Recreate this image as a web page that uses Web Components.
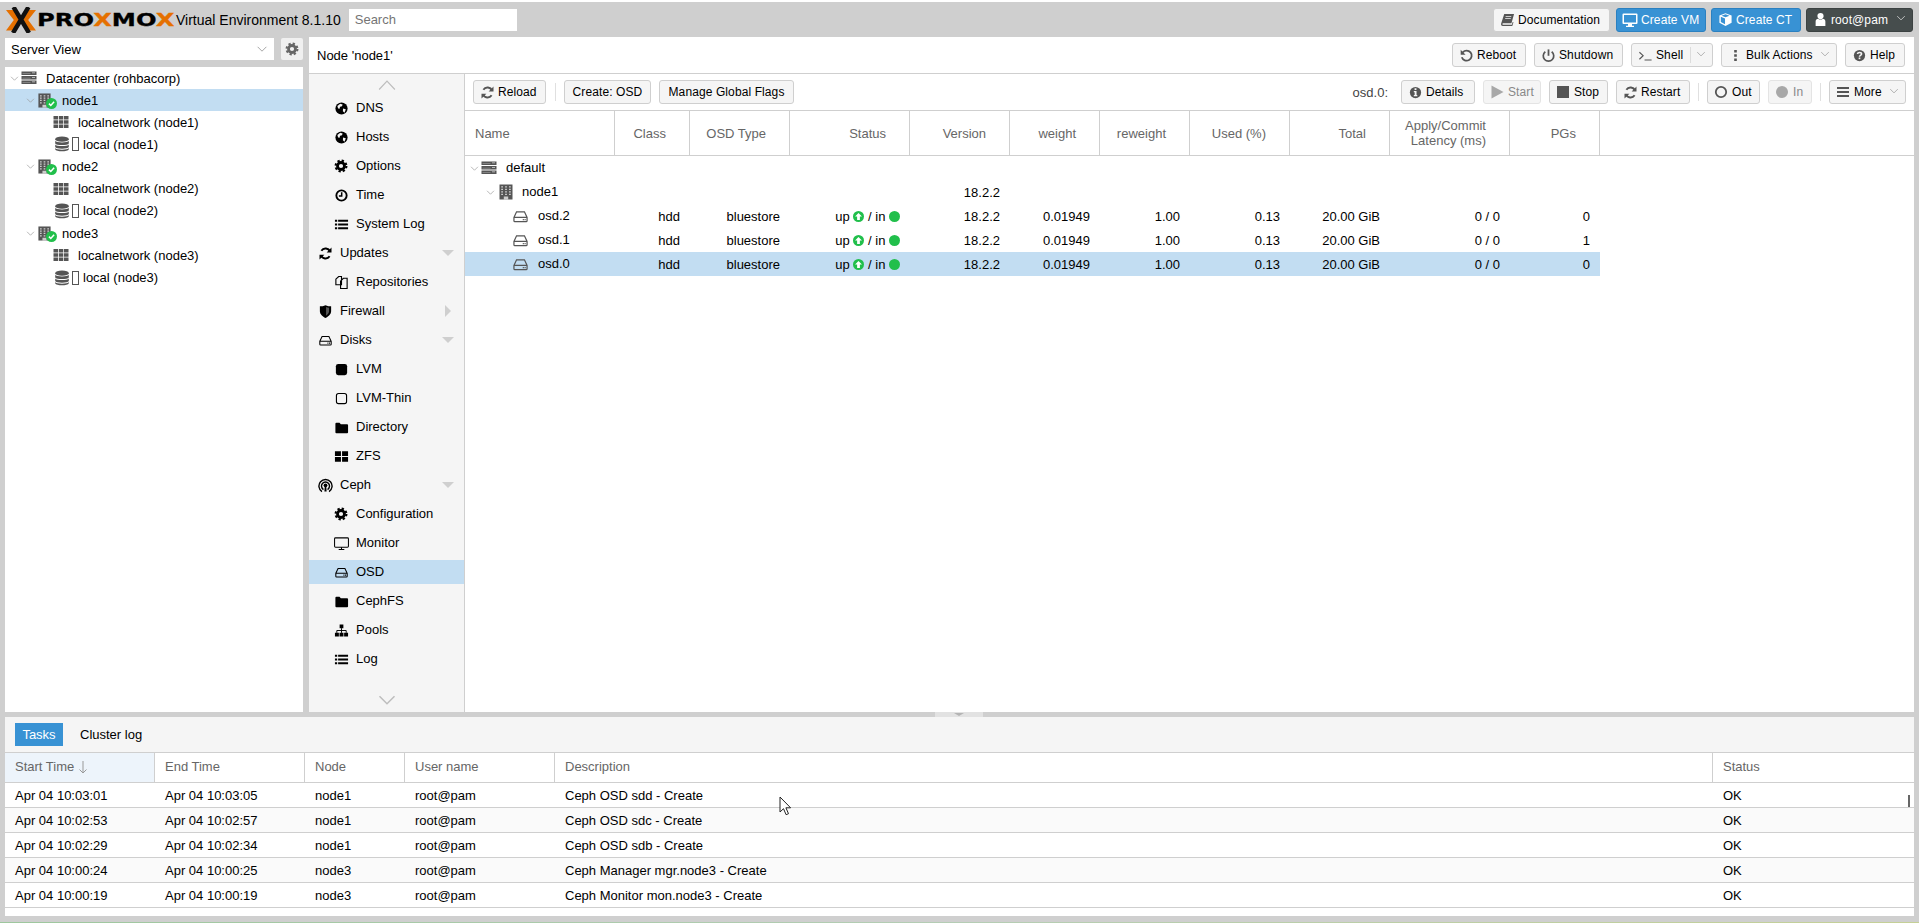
<!DOCTYPE html>
<html>
<head>
<meta charset="utf-8">
<title>node1 - Proxmox Virtual Environment</title>
<style>
  html, body { margin: 0; padding: 0; height: 100%; overflow: hidden; }
  body { font: 13px "Liberation Sans", Arial, sans-serif; color: #000; }
</style>
</head>
<body>

<pve-app>
  <pve-topbar slot="top"></pve-topbar>

  <pve-side slot="side">
    <tree-row depth="0" icon="datacenter" open>Datacenter (rohbacorp)</tree-row>
    <tree-row depth="1" icon="node" open selected>node1</tree-row>
    <tree-row depth="2" icon="network">localnetwork (node1)</tree-row>
    <tree-row depth="2" icon="storage">local (node1)</tree-row>
    <tree-row depth="1" icon="node" open>node2</tree-row>
    <tree-row depth="2" icon="network">localnetwork (node2)</tree-row>
    <tree-row depth="2" icon="storage">local (node2)</tree-row>
    <tree-row depth="1" icon="node" open>node3</tree-row>
    <tree-row depth="2" icon="network">localnetwork (node3)</tree-row>
    <tree-row depth="2" icon="storage">local (node3)</tree-row>
  </pve-side>

  <pve-content slot="main">
    <pve-nav slot="nav">
      <nav-item sub icon="globe">DNS</nav-item>
      <nav-item sub icon="globe">Hosts</nav-item>
      <nav-item sub icon="gear" isize="14">Options</nav-item>
      <nav-item sub icon="clock">Time</nav-item>
      <nav-item sub icon="list">System Log</nav-item>
      <nav-item icon="refresh" arrow="down">Updates</nav-item>
      <nav-item sub icon="files">Repositories</nav-item>
      <nav-item icon="shield" arrow="right">Firewall</nav-item>
      <nav-item icon="hdd" isize="13" arrow="down">Disks</nav-item>
      <nav-item sub icon="square">LVM</nav-item>
      <nav-item sub icon="square-o">LVM-Thin</nav-item>
      <nav-item sub icon="folder">Directory</nav-item>
      <nav-item sub icon="th">ZFS</nav-item>
      <nav-item icon="ceph" arrow="down">Ceph</nav-item>
      <nav-item sub icon="gear" isize="14">Configuration</nav-item>
      <nav-item sub icon="desktop">Monitor</nav-item>
      <nav-item sub icon="hdd" isize="13" selected>OSD</nav-item>
      <nav-item sub icon="folder">CephFS</nav-item>
      <nav-item sub icon="sitemap">Pools</nav-item>
      <nav-item sub icon="list">Log</nav-item>
    </pve-nav>
    <osd-panel slot="panel"></osd-panel>
  </pve-content>

  <task-log slot="bottom"></task-log>
</pve-app>

<script>
// icons are all drawn on a 16x16 box, currentColor
const ICONS = {
  globe: '<circle cx="8" cy="8" r="6.5" fill="currentColor"/><path fill="#f5f5f5" d="M3.6 5.2 6.6 3l2.6.6-.7 2-2 .5-.8 2.4-1.4-.8zM9.6 8l3 .8-1.4 3.6-1.7-1.4z"/>',
  gear: '<circle cx="8" cy="8" r="4" fill="none" stroke="currentColor" stroke-width="3.2"/><circle cx="8" cy="8" r="6.2" fill="none" stroke="currentColor" stroke-width="2.4" stroke-dasharray="2.6 2.27"/>',
  clock: '<circle cx="8" cy="8" r="5.5" fill="none" stroke="currentColor" stroke-width="2"/><path fill="none" stroke="currentColor" stroke-width="1.6" d="M8.2 4.600v4H5.200"/>',
  list: '<path fill="currentColor" d="M1 3h2.400v2H1zM4.400 3H15v2H4.400zM1 7h2.400v2H1zM4.400 7H15v2H4.400zM1 11h2.400v2H1zM4.400 11H15v2H4.400z"/>',
  refresh: '<path fill="none" stroke="currentColor" stroke-width="2" d="M12.800 6A5.200 5.200 0 0 0 3.600 5M3.200 10a5.200 5.200 0 0 0 9.200 1"/><path fill="currentColor" d="M14.400 1.600v5.200H9.200zM1.600 14.400V9.200h5.200z"/>',
  files: '<path fill="#f5f5f5" stroke="currentColor" stroke-width="1.200" d="M2 4.500 5 1.600h3v8.800H2zM7 6.500l3-3h4v10.900H7z"/>',
  shield: '<path fill="currentColor" d="M8 1.200c2 1 4 1.300 6 1.300v5.200c0 3.200-3 5.800-6 7.100-3-1.300-6-3.900-6-7.100V2.500c2 0 4-.3 6-1.300z"/><path fill="#f5f5f5" d="M8.600 3.300c1 .4 2 .6 3.200.7v3.700c0 2-1.600 3.700-3.200 4.700z" opacity=".35"/>',
  hdd: '<path fill="none" stroke="currentColor" stroke-width="1.300" d="M1 9 3.800 3h8.400L15 9v3.500a1 1 0 0 1-1 1H2a1 1 0 0 1-1-1zM1 9h14"/><path fill="currentColor" d="M10.400 10.600h1.200v1.300h-1.200zM12.300 10.600h1.200v1.300h-1.200z"/>',
  square: '<rect x="2" y="2" width="12" height="12" rx="2.500" fill="currentColor"/>',
  'square-o': '<rect x="2.600" y="2.600" width="10.800" height="10.800" rx="2.200" fill="none" stroke="currentColor" stroke-width="1.200"/>',
  folder: '<path fill="currentColor" d="M1.500 4a1 1 0 0 1 1-1h3.400l1.400 1.500H14a1 1 0 0 1 1 1V13a1 1 0 0 1-1 1H2.500a1 1 0 0 1-1-1z"/>',
  th: '<path fill="currentColor" d="M1 2.500H7.400V7.400H1zM8.600 2.500H15v4.900H8.600zM1 8.600H7.400v4.900H1zM8.600 8.600H15v4.900H8.600z"/>',
  ceph: '<g fill="none" stroke="currentColor"><path stroke-width="1.500" d="M4.200 14.500A7 7 0 1 1 11.800 14.500"/><path stroke-width="1.500" d="M5.800 12.300A4.300 4.300 0 1 1 10.200 12.300"/></g><circle cx="8" cy="7.800" r="2" fill="currentColor"/><path fill="currentColor" d="M7.200 9h1.600l.4 5.500H6.800z"/>',
  desktop: '<rect x=".6" y="2" width="14.800" height="10" rx="1" fill="none" stroke="currentColor" stroke-width="1.100"/><path fill="none" stroke="currentColor" stroke-width="1.100" d="M8 12v2M5 14.300h6"/>',
  sitemap: '<path fill="currentColor" d="M6 1.500h4v4H6zM1 10.500h4.200v4H1zM5.900 10.500h4.200v4H5.900zM10.800 10.500H15v4h-4.200z"/><path fill="none" stroke="currentColor" d="M8 5.500v5M3 10.500V8h10v2.500"/>',
  reboot: '<path fill="none" stroke="currentColor" stroke-width="1.900" d="M4 4.600A5.400 5.400 0 1 1 3 9.800"/><path fill="currentColor" d="M1.800 1.900v5.200H7z"/>',
  power: '<path fill="none" stroke="currentColor" stroke-width="1.800" d="M4.600 4a5.600 5.600 0 1 0 6.800 0"/><path fill="none" stroke="currentColor" stroke-width="1.900" d="M8 1.500v6.800"/>',
  terminal: '<path fill="none" stroke="currentColor" stroke-width="1.200" d="M1.500 4.500 5.500 8.200 1.500 12M7 12.800h7.500"/>',
  dots: '<path fill="currentColor" d="M6.600 2.200h2.800v2.600H6.600zM6.600 6.700h2.800v2.600H6.600zM6.600 11.200h2.800v2.600H6.600z"/>',
  help: '<circle cx="8" cy="8" r="6" fill="currentColor"/><path fill="none" stroke="#f5f5f5" stroke-width="1.700" d="M5.800 6.400c.3-2.200 4.400-2.200 4.400 0 0 1.500-2.200 1.400-2.200 2.800"/><path fill="#f5f5f5" d="M7.100 10.100h1.800v1.800H7.100z"/>',
  info: '<circle cx="8" cy="8" r="6" fill="currentColor"/><path fill="#f5f5f5" d="M7 3.500h2v1.800H7zM6.200 6.400h2.900v4.300h.8v1.400H6.200v-1.400h.9V7.800h-.9z"/>',
  play: '<path fill="currentColor" d="M2.500 1.500 14.500 8 2.500 14.500z"/>',
  stop: '<path fill="currentColor" d="M2 2h12v12H2z"/>',
  ring: '<circle cx="8" cy="8" r="5.200" fill="none" stroke="currentColor" stroke-width="1.800"/>',
  dot: '<circle cx="8" cy="8" r="6" fill="currentColor"/>',
  bars: '<path fill="currentColor" d="M2 3h12v1.900H2zM2 7.100h12V9H2zM2 11.100h12V13H2z"/>',
  book: '<path fill="currentColor" d="M4.500 2H15l-2.800 10H3.200c-.8 0-.9 1.700 0 1.700H12.600l.9-3 .9.300-1.300 3.900H3c-1.600 0-2.200-1.600-1.700-3z"/><path fill="#f5f5f5" d="M6 4.400h6v.8H6zM5.500 6.400h6v.8h-6z"/>',
  monitor: '<path fill="currentColor" d="M1.500 1.500h13a1 1 0 0 1 1 1V11a1 1 0 0 1-1 1h-4.500v1.800h2V15H4v-1.200h2V12H1.500a1 1 0 0 1-1-1V2.500a1 1 0 0 1 1-1zM2 3v7.500h12V3z"/>',
  cube: '<path fill="currentColor" d="M8 1.200 14.500 3.800V11.500L8 14.800 1.500 11.500V3.800z"/><path fill="#3892d4" d="M3 5 7.500 6.800V13L3 10.700zM8 5.500 3.800 3.900 8 2.400 12.200 3.900z"/>',
  user: '<circle cx="8" cy="4.300" r="3.300" fill="currentColor"/><path fill="currentColor" d="M2.800 14.800V10c0-1.800 1.300-2.900 2.600-2.900 1.600 1.200 3.600 1.200 5.200 0 1.300 0 2.600 1.100 2.600 2.900v4.800z"/>',
  datacenter: '<path fill="currentColor" d="M.5 1.500h15v3.500H.5zM.5 6h15v3.500H.5zM.5 10.500h15V14H.5z"/><path fill="#fff" opacity=".75" d="M11 2.400h3v.9h-3zM11 6.900h3v.9h-3zM11 11.400h3v.9h-3z"/><path fill="#fff" opacity=".35" d="M1.500 3.300h8v.8h-8zM1.500 7.800h8v.8h-8zM1.500 12.300h8v.8h-8z"/>',
  building: '<path fill="currentColor" d="M1.500 .5h13v15h-13z"/><path fill="#fff" opacity=".7" d="M3.200 2.300h1.800v1.300H3.200zM7.100 2.300h1.800v1.300H7.100zM11 2.300h1.800v1.300H11zM3.200 4.800h1.800v1.300H3.200zM7.100 4.800h1.800v1.300H7.100zM11 4.800h1.800v1.300H11zM3.200 7.300h1.800v1.300H3.200zM7.100 7.300h1.800v1.300H7.100zM11 7.300h1.800v1.300H11zM3.200 9.800h1.800v1.300H3.200zM7.100 9.800h1.800v1.300H7.100zM11 9.800h1.800v1.300H11zM5.800 12.500h4.400v3H5.800z"/>',
  network: '<path fill="currentColor" d="M.5 2H5V5.400H.5zM5.800 2h4.500v3.400H5.800zM11 2h4.500v3.400H11zM.5 6.300H5v3.400H.5zM5.800 6.300h4.500v3.400H5.800zM11 6.300h4.500v3.400H11zM.5 10.600H5V14H.5zM5.800 10.600h4.500V14H5.800zM11 10.600h4.500V14H11z"/>',
  db: '<ellipse cx="8" cy="3.200" rx="6.800" ry="2.600" fill="currentColor"/><path fill="currentColor" d="M1.200 4.800C2 7 14 7 14.800 4.800V7.400C14 9.600 2 9.600 1.200 7.400zM1.200 8.400C2 10.600 14 10.600 14.800 8.400V11C14 13.200 2 13.200 1.200 11zM1.200 12C2 14.200 14 14.200 14.800 12v1.200c-.8 2.800-12.800 2.800-13.600 0z"/>',
  check: '<circle cx="8" cy="8" r="8" fill="#21bf4b"/><path fill="none" stroke="#fff" stroke-width="2.200" d="M4.300 8.200 7 10.900 11.800 5.600"/>',
  upcircle: '<circle cx="8" cy="8" r="8" fill="#21bf4b"/><path fill="#fff" d="M8 2.800 13 8 H10V13H6V8H3z"/>',
  indot: '<circle cx="8" cy="8" r="8" fill="#21bf4b"/>',
  chevdown: '<path fill="none" stroke="currentColor" stroke-width="1" d="M3 5.500 8 10.500 13 5.500"/>',
  chevup: '<path fill="none" stroke="currentColor" stroke-width="1" d="M1 12 8 4.500 15 12"/>'
}

class PveIcon extends HTMLElement {
  connectedCallback() {
    const size = this.getAttribute('size') || 16
    if (!this.shadowRoot) this.attachShadow({ mode: 'open' })
    this.shadowRoot.innerHTML = `
      <style>
        :host { display: inline-flex; flex: none; width: ${size}px; height: ${size}px; }
        svg { display: block; width: 100%; height: 100%; }
      </style>
      <svg viewBox="0 0 16 16">${ICONS[this.getAttribute('name')] || ''}</svg>`
  }
}
customElements.define('pve-icon', PveIcon)

const appTemplate = document.createElement('template')
appTemplate.innerHTML = `
  <style>
    :host { display: flex; flex-direction: column; width: 100%; height: 100vh; background: #cfcfcf; overflow: hidden; position: relative; }
    .mid { display: flex; gap: 6px; height: 675px; padding: 0 5px; flex: none; }
    .splitter { height: 5px; flex: none; display: flex; justify-content: center; }
    .splitter div { width: 48px; margin-left: -1px; background: #e2e2e2; display: flex; justify-content: center; align-items: center; }
    .splitter i { width: 0; height: 0; border-left: 5px solid transparent; border-right: 5px solid transparent; border-top: 3px solid #b4b4b4; }
    .low { display: block; margin: 0 5px; height: 199px; flex: none; }
    .edge { margin-top: auto; height: 1px; background: linear-gradient(90deg, #9ec79e, #b5cdb5 50%, #c5d096); }
    .cursor { position: absolute; left: 779px; top: 796px; width: 13px; height: 20px; }
  </style>
  <slot name="top"></slot>
  <div class="mid">
    <slot name="side"></slot>
    <slot name="main"></slot>
  </div>
  <div class="splitter"><div><i></i></div></div>
  <div class="low"><slot name="bottom"></slot></div>
  <div class="edge"></div>
  <svg class="cursor" viewBox="0 0 13 20"><path fill="#fff" stroke="#222" stroke-width="1" d="M1 1v15l3.500-3.300 2.600 6 2.400-1-2.600-5.900h4.700z"/></svg>
`
class PveApp extends HTMLElement {
  constructor() {
    super()
    this.attachShadow({ mode: 'open' })
    this.shadowRoot.appendChild(appTemplate.content.cloneNode(true))
  }
}
customElements.define('pve-app', PveApp)

const buttonTemplate = document.createElement('template')
buttonTemplate.innerHTML = `
  <style>
    :host { display: inline-flex; align-items: center; box-sizing: border-box; height: 24px; flex: none;
      background: #f5f5f5; border: 1px solid #cfcfcf; border-radius: 3px; color: #000; padding: 0 5px; white-space: nowrap; font-size: 12px; letter-spacing: .1px; }
    :host([plain]) { padding: 0; justify-content: center; }
    :host([kind=blue]) { background: #3892d4; border-color: #2b80c0; color: #fff; }
    :host([kind=dark]) { background: #464d4d; border-color: #3c4242; color: #fff; }
    :host([kind=pale]) { background: #f5f5f5; border-color: #e4e4e4; color: #888; }
    .ic { display: inline-flex; width: 16px; justify-content: center; margin-right: 3px; color: #555; }
    :host([kind=blue]) .ic, :host([kind=dark]) .ic { color: #fff; }
    :host([kind=pale]) .ic { color: #a8a8a8; }
    .tx { flex: 1; }
    :host([plain]) .tx { flex: none; }
    .split { width: 1px; align-self: stretch; margin: 3px 0 3px 6px; background: #dcdcdc; }
    .ch { color: #9a9a9a; margin-left: 4px; }
    :host([kind=dark]) .ch { color: #e4e4e4; }
  </style>
  <span class="ic"></span><span class="tx"><slot></slot></span>
`
class PveButton extends HTMLElement {
  constructor() {
    super()
    this.attachShadow({ mode: 'open' })
    this.shadowRoot.appendChild(buttonTemplate.content.cloneNode(true))
  }
  connectedCallback() {
    const icon = this.getAttribute('icon')
    const ic = this.shadowRoot.querySelector('.ic')
    if (icon) ic.innerHTML = `<pve-icon name="${icon}" size="${this.getAttribute('isize') || 15}"></pve-icon>`
    else { ic.remove(); this.setAttribute('plain', '') }
    if (this.hasAttribute('split')) {
      const s = document.createElement('span')
      s.className = 'split'
      this.shadowRoot.appendChild(s)
    }
    if (this.hasAttribute('menu')) {
      const c = document.createElement('span')
      c.className = 'ch'
      c.innerHTML = '<pve-icon name="chevdown" size="12"></pve-icon>'
      this.shadowRoot.appendChild(c)
    }
  }
}
customElements.define('pve-btn', PveButton)

const topbarTemplate = document.createElement('template')
topbarTemplate.innerHTML = `
  <style>
    :host { display: flex; align-items: center; height: 35px; border-top: 2px solid #fff; flex: none; padding: 0 6px 0 6px; }
    .mark { width: 30px; height: 26px; flex: none; }
    .word { width: 136px; margin-left: 1px; flex: none; font: bold 18.5px "DejaVu Sans", sans-serif; color: #000; -webkit-text-stroke: .3px currentColor;
      transform: scaleX(1.31); transform-origin: left center; white-space: nowrap; line-height: 26px; }
    .word b { color: #e57000; font-weight: bold; }
    .ver { margin-left: 3px; font-size: 14px; flex: none; white-space: nowrap; }
    .search { box-sizing: border-box; margin-left: 8px; width: 168px; height: 22px; background: #fff; color: #757575; font-size: 13px; line-height: 22px; padding-left: 6px; flex: none; }
    .btns { margin-left: auto; display: flex; align-items: center; gap: 5px; }
  </style>
  <svg class="mark" viewBox="0 0 30 26">
    <path fill="#e57000" d="M0 3h7.500l8 10-8 10.500H0L7.800 13zM30 3h-7.500l-8 10 8 10.500H30L22.200 13z"/>
    <path fill="none" stroke="#111" stroke-width="4.400" d="M7.500 0 23 26M22.500 0 7 26"/>
  </svg>
  <span class="word">PRO<b>X</b>MO<b>X</b></span>
  <span class="ver">Virtual Environment 8.1.10</span>
  <span class="search">Search</span>
  <div class="btns">
    <pve-btn icon="book" style="width:117px;margin-right:1px">Documentation</pve-btn>
    <pve-btn icon="monitor" isize="16" kind="blue" style="width:90px">Create VM</pve-btn>
    <pve-btn icon="cube" kind="blue" style="width:90px">Create CT</pve-btn>
    <pve-btn icon="user" kind="dark" menu style="width:107px">root@pam</pve-btn>
  </div>
`
class PveTopbar extends HTMLElement {
  constructor() {
    super()
    this.attachShadow({ mode: 'open' })
    this.shadowRoot.appendChild(topbarTemplate.content.cloneNode(true))
  }
}
customElements.define('pve-topbar', PveTopbar)

const sideTemplate = document.createElement('template')
sideTemplate.innerHTML = `
  <style>
    :host { display: flex; flex-direction: column; width: 298px; flex: none; }
    .head { display: flex; gap: 7px; margin-top: 1px; height: 22px; flex: none; }
    .combo { flex: 1; display: flex; align-items: center; background: #fff; padding-left: 6px; padding-right: 5px; }
    .combo span { flex: 1; }
    .combo pve-icon { color: #999; }
    .gear { width: 22px; display: flex; align-items: center; justify-content: center; background: #f0f0f0; color: #666; border-radius: 2px; }
    .tree { margin-top: 7px; background: #fff; flex: 1; }
  </style>
  <div class="head">
    <div class="combo"><span>Server View</span><pve-icon name="chevdown" size="14"></pve-icon></div>
    <div class="gear"><pve-icon name="gear" size="14"></pve-icon></div>
  </div>
  <div class="tree"><slot></slot></div>
`
class PveSide extends HTMLElement {
  constructor() {
    super()
    this.attachShadow({ mode: 'open' })
    this.shadowRoot.appendChild(sideTemplate.content.cloneNode(true))
  }
}
customElements.define('pve-side', PveSide)

// tree rows, used both in the resource tree and the osd tree
const treeRowTemplate = document.createElement('template')
treeRowTemplate.innerHTML = `
  <style>
    :host { display: flex; align-items: center; height: var(--row-h, 22px); white-space: nowrap; }
    :host([selected]) { background: #c2ddf2; }
    :host([icon=storage]) { height: 22.67px; }
    .chev { width: 16px; flex: none; display: flex; justify-content: center; color: #999; }
    .ico { display: flex; align-items: center; flex: none; position: relative; color: #555; }
    .mini { position: absolute; left: 9px; top: 5px; }
    .box { width: 7px; height: 14px; box-sizing: border-box; border: 1px solid #555; background: #fff; margin-left: 2px; }
    .tx { padding-bottom: var(--tx-shift, 0); }
  </style>
  <span class="chev"></span><span class="ico"></span><span class="tx"><slot></slot></span>
`
class TreeRow extends HTMLElement {
  constructor() {
    super()
    this.attachShadow({ mode: 'open' })
    this.shadowRoot.appendChild(treeRowTemplate.content.cloneNode(true))
  }
  connectedCallback() {
    const depth = +this.getAttribute('depth')
    const icon = this.getAttribute('icon')
    const ico = this.shadowRoot.querySelector('.ico')
    const chev = this.shadowRoot.querySelector('.chev')
    const tx = this.shadowRoot.querySelector('.tx')
    this.style.paddingLeft = depth * 16 + 1 + 'px'
    if (this.hasAttribute('open')) chev.innerHTML = '<pve-icon name="chevdown" size="11"></pve-icon>'
    if (icon == 'datacenter') {
      ico.innerHTML = '<pve-icon name="datacenter" size="16"></pve-icon>'
      ico.style.marginLeft = '-1px'
      tx.style.marginLeft = '9px'
    } else if (icon == 'node') {
      ico.innerHTML = '<pve-icon name="building" size="15"></pve-icon><pve-icon class="mini" name="check" size="11"></pve-icon>'
      ico.style.marginLeft = '-1px'
      tx.style.marginLeft = '10px'
    } else if (icon == 'network') {
      chev.style.width = '0'
      ico.innerHTML = '<pve-icon name="network" size="16"></pve-icon>'
      ico.style.marginLeft = '15px'
      tx.style.marginLeft = '9px'
    } else if (icon == 'storage') {
      chev.style.width = '0'
      ico.innerHTML = '<pve-icon name="db" size="16"></pve-icon><span class="box"></span>'
      ico.style.marginLeft = '16px'
      tx.style.marginLeft = '4px'
    } else if (icon == 'hdd') {
      chev.style.width = '0'
      ico.innerHTML = '<pve-icon name="hdd" size="15"></pve-icon>'
      ico.style.marginLeft = '16px'
      tx.style.marginLeft = '10px'
    }
  }
}
customElements.define('tree-row', TreeRow)

const contentTemplate = document.createElement('template')
contentTemplate.innerHTML = `
  <style>
    :host { display: flex; flex-direction: column; flex: 1; min-width: 0; background: #fff; }
    .title { display: flex; align-items: center; height: 36px; border-bottom: 1px solid #cfcfcf; padding: 0 9px 0 8px; flex: none; }
    .title span { flex: 1; }
    .btns { display: flex; gap: 8px; }
    .body { display: flex; flex: 1; min-height: 0; }
  </style>
  <div class="title">
    <span>Node 'node1'</span>
    <div class="btns">
      <pve-btn icon="reboot" style="width:74px">Reboot</pve-btn>
      <pve-btn icon="power" style="width:89px">Shutdown</pve-btn>
      <pve-btn icon="terminal" menu split style="width:82px">Shell</pve-btn>
      <pve-btn icon="dots" menu style="width:116px">Bulk Actions</pve-btn>
      <pve-btn icon="help" style="width:60px">Help</pve-btn>
    </div>
  </div>
  <div class="body">
    <slot name="nav"></slot>
    <slot name="panel"></slot>
  </div>
`
class PveContent extends HTMLElement {
  constructor() {
    super()
    this.attachShadow({ mode: 'open' })
    this.shadowRoot.appendChild(contentTemplate.content.cloneNode(true))
  }
}
customElements.define('pve-content', PveContent)

const navTemplate = document.createElement('template')
navTemplate.innerHTML = `
  <style>
    :host { display: flex; flex-direction: column; width: 155px; flex: none; background: #f5f5f5; border-right: 1px solid #cfcfcf; }
    .arrow { height: 22px; display: flex; align-items: center; justify-content: center; color: #bdbdbd; flex: none; }
    .list { flex: 1; display: flex; flex-direction: column; gap: 5px; }
    .down { margin-top: auto; margin-bottom: 1px; }
  </style>
  <div class="arrow"><pve-icon name="chevup" size="18"></pve-icon></div>
  <div class="list"><slot></slot></div>
  <div class="arrow down"><pve-icon name="chevdown" size="24"></pve-icon></div>
`
class PveNav extends HTMLElement {
  constructor() {
    super()
    this.attachShadow({ mode: 'open' })
    this.shadowRoot.appendChild(navTemplate.content.cloneNode(true))
  }
}
customElements.define('pve-nav', PveNav)

const navItemTemplate = document.createElement('template')
navItemTemplate.innerHTML = `
  <style>
    :host { display: flex; align-items: center; height: 24px; flex: none; padding-left: 8px; white-space: nowrap; }
    :host([sub]) { padding-left: 24px; }
    :host([selected]) { background: #c2ddf2; }
    .ico { width: 16px; display: flex; justify-content: center; margin-right: 7px; flex: none; }
    .tx { flex: 1; padding-bottom: 1px; }
    .arr { width: 0; height: 0; flex: none; }
    .arr.down { border-left: 6px solid transparent; border-right: 6px solid transparent; border-top: 6px solid #cfcfcf; margin-right: 10px; }
    .arr.right { border-top: 6px solid transparent; border-bottom: 6px solid transparent; border-left: 6px solid #cfcfcf; margin-right: 13px; }
  </style>
  <span class="ico"></span><span class="tx"><slot></slot></span><span class="arr"></span>
`
class NavItem extends HTMLElement {
  constructor() {
    super()
    this.attachShadow({ mode: 'open' })
    this.shadowRoot.appendChild(navItemTemplate.content.cloneNode(true))
  }
  connectedCallback() {
    const size = this.getAttribute('isize') || 15
    this.shadowRoot.querySelector('.ico').innerHTML = `<pve-icon name="${this.getAttribute('icon')}" size="${size}"></pve-icon>`
    const arrow = this.getAttribute('arrow')
    if (arrow) this.shadowRoot.querySelector('.arr').classList.add(arrow)
  }
}
customElements.define('nav-item', NavItem)

// grid row: children are the cells, column widths come from --cols
const gridRowTemplate = document.createElement('template')
gridRowTemplate.innerHTML = `
  <style>
    :host { display: grid; grid-template-columns: var(--cols); align-items: center; height: var(--row-h, 24px); box-sizing: border-box; white-space: nowrap; }
    :host([selected]) { background: #c2ddf2; }
    ::slotted(*) { padding: 0 10px; min-width: 0; }
    ::slotted(.r) { text-align: right; }
  </style>
  <slot></slot>
`
class GridRow extends HTMLElement {
  constructor() {
    super()
    this.attachShadow({ mode: 'open' })
    this.shadowRoot.appendChild(gridRowTemplate.content.cloneNode(true))
  }
}
customElements.define('grid-row', GridRow)

const OSD_COLS = '150px 75px 100px 120px 100px 90px 90px 100px 100px 120px 90px'
const statusCell = `up <pve-icon name="upcircle" size="11" style="vertical-align:-1px"></pve-icon> / in <pve-icon name="indot" size="11" style="vertical-align:-1px"></pve-icon>`
const osdRow = (name, pgs, sel) => `
  <grid-row ${sel ? 'selected' : ''} style="width:1135px">
    <tree-row depth="1" icon="hdd" style="--row-h:24px;--tx-shift:2px;margin-left:15px;padding-right:0">${name}</tree-row>
    <span class="r">hdd</span><span class="r">bluestore</span><span class="r">${statusCell}</span>
    <span class="r">18.2.2</span><span class="r">0.01949</span><span class="r">1.00</span><span class="r">0.13</span>
    <span class="r">20.00 GiB</span><span class="r">0 / 0</span><span class="r">${pgs}</span>
  </grid-row>`

const osdTemplate = document.createElement('template')
osdTemplate.innerHTML = `
  <style>
    :host { display: flex; flex-direction: column; flex: 1; min-width: 0; --cols: ${OSD_COLS}; }
    .bar { display: flex; align-items: center; gap: 8px; height: 36px; padding: 0 8px; border-bottom: 1px solid #cfcfcf; flex: none; }
    .sep { width: 1px; height: 18px; background: #e0e0e0; flex: none; }
    .sep.first { margin-left: 1px; }
    .gap { flex: 1; }
    .lbl { color: #444; margin-right: 5px; }
    .headline { border-bottom: 1px solid #cfcfcf; flex: none; }
    .head { display: grid; grid-template-columns: var(--cols); width: 1135px; height: 44px; color: #666; }
    .head div { display: flex; align-items: center; justify-content: flex-end; text-align: right; padding: 0 23px 0 10px; border-right: 1px solid #cfcfcf; box-sizing: border-box; line-height: 15px; }
    .head div:first-child { justify-content: flex-start; }
    .sub { display: flex; align-items: center; height: 24px; padding-left: 17px !important; }
    .sub .c { color: #999; margin: 0 2px 0 3px; }
    .sub .b { color: #555; }
    .sub span { margin-left: 8px; padding-bottom: 2px; }
  </style>
  <div class="bar">
    <pve-btn icon="refresh" style="width:73px">Reload</pve-btn>
    <span class="sep first"></span>
    <pve-btn style="width:87px">Create: OSD</pve-btn>
    <pve-btn style="width:135px">Manage Global Flags</pve-btn>
    <span class="gap"></span>
    <span class="lbl">osd.0:</span>
    <pve-btn icon="info" style="width:74px">Details</pve-btn>
    <pve-btn icon="play" isize="16" kind="pale" style="width:58px">Start</pve-btn>
    <pve-btn icon="stop" isize="16" style="width:59px">Stop</pve-btn>
    <pve-btn icon="refresh" style="width:74px">Restart</pve-btn>
    <span class="sep"></span>
    <pve-btn icon="ring" isize="16" style="width:53px">Out</pve-btn>
    <pve-btn icon="dot" isize="16" kind="pale" style="width:44px">In</pve-btn>
    <span class="sep"></span>
    <pve-btn icon="bars" isize="16" menu style="width:77px">More</pve-btn>
  </div>
  <div class="headline"><div class="head">
    <div>Name</div><div>Class</div><div>OSD Type</div><div>Status</div><div>Version</div><div>weight</div><div>reweight</div><div>Used (%)</div><div>Total</div><div>Apply/Commit Latency (ms)</div><div>PGs</div>
  </div></div>
  <tree-row depth="0" icon="datacenter" open style="--row-h:24px;--tx-shift:2px">default</tree-row>
  <grid-row style="width:1135px">
    <div class="sub"><pve-icon class="c" name="chevdown" size="11"></pve-icon><pve-icon class="b" name="building" size="16"></pve-icon><span>node1</span></div>
    <i></i><i></i><i></i><span class="r">18.2.2</span>
  </grid-row>
  ${osdRow('osd.2', 0)}${osdRow('osd.1', 1)}${osdRow('osd.0', 0, true)}
`
class OsdPanel extends HTMLElement {
  constructor() {
    super()
    this.attachShadow({ mode: 'open' })
    this.shadowRoot.appendChild(osdTemplate.content.cloneNode(true))
  }
}
customElements.define('osd-panel', OsdPanel)

const TASKS = [
  ['Apr 04 10:03:01', 'Apr 04 10:03:05', 'node1', 'Ceph OSD sdd - Create'],
  ['Apr 04 10:02:53', 'Apr 04 10:02:57', 'node1', 'Ceph OSD sdc - Create'],
  ['Apr 04 10:02:29', 'Apr 04 10:02:34', 'node1', 'Ceph OSD sdb - Create'],
  ['Apr 04 10:00:24', 'Apr 04 10:00:25', 'node3', 'Ceph Manager mgr.node3 - Create'],
  ['Apr 04 10:00:19', 'Apr 04 10:00:19', 'node3', 'Ceph Monitor mon.node3 - Create']
]

const logTemplate = document.createElement('template')
logTemplate.innerHTML = `
  <style>
    :host { display: flex; flex-direction: column; height: 199px; background: #f5f5f5; position: relative; --cols: 150px 150px 100px 150px 1158px 1fr; --row-h: 25px; }
    .tabs { display: flex; align-items: center; height: 35px; padding-left: 10px; flex: none; }
    .tab { height: 23px; line-height: 23px; padding: 0 6px; background: #3892d4; color: #fff; width: 36px; text-align: center; }
    .tab2 { margin-left: 17px; }
    .grid { flex: 1; background: #fff; border-top: 1px solid #cfcfcf; display: flex; flex-direction: column; }
    .head { display: grid; grid-template-columns: var(--cols); height: 30px; flex: none; border-bottom: 1px solid #cfcfcf; color: #666; box-sizing: border-box; }
    .head div { display: flex; align-items: center; padding: 0 0 2px 10px; border-right: 1px solid #cfcfcf; gap: 4px; }
    .head div:last-child { border-right: 0; }
    .head .sorted { background: #edf4fb; }
    .rows { flex: 1; background: #fff; }
    .rows grid-row { border-bottom: 1px solid #cfcfcf; }
    .rows grid-row:nth-child(even) { background: #fafafa; }
    .thumb { position: absolute; right: 4px; top: 78px; width: 2px; height: 12px; background: #666; }
  </style>
  <div class="tabs"><span class="tab">Tasks</span><span class="tab2">Cluster log</span></div>
  <div class="grid">
    <div class="head">
      <div class="sorted">Start Time <svg width="10" height="14" viewBox="0 0 10 14"><path fill="none" stroke="#999" d="M5 1v12M1.500 9.500 5 13l3.500-3.500"/></svg></div>
      <div>End Time</div><div>Node</div><div>User name</div><div>Description</div><div>Status</div>
    </div>
    <div class="rows"></div>
  </div>
  <div class="thumb"></div>
`
class TaskLog extends HTMLElement {
  constructor() {
    super()
    this.attachShadow({ mode: 'open' })
    this.shadowRoot.appendChild(logTemplate.content.cloneNode(true))
    this.shadowRoot.querySelector('.rows').innerHTML = TASKS.map(t => `
      <grid-row><span>${t[0]}</span><span>${t[1]}</span><span>${t[2]}</span><span>root@pam</span><span>${t[3]}</span><span>OK</span></grid-row>`).join('')
  }
}
customElements.define('task-log', TaskLog)
</script>
</body>
</html>
